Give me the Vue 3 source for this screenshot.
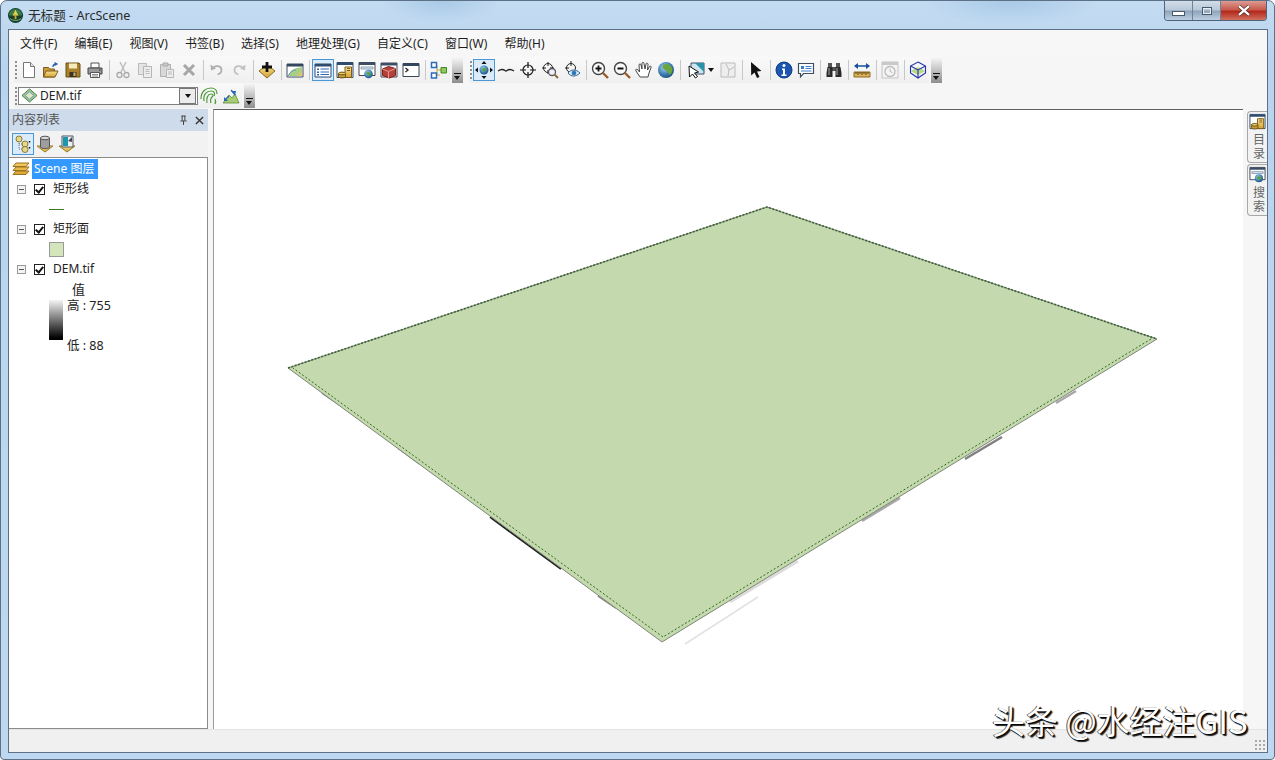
<script setup>
const menus = ['文件(F)', '编辑(E)', '视图(V)', '书签(B)', '选择(S)', '地理处理(G)', '自定义(C)', '窗口(W)', '帮助(H)']
const bar1a = ['new', 'open', 'save', 'print', '|', 'cut', 'copy', 'paste', 'del', '|', 'undo', 'redo', '|', 'add', '|', 'sceneimg', '|', '*toc', 'catalog', 'searchwin', 'toolbox', 'python', '|', 'model']
const bar1b = ['*nav', 'fly', 'target', 'targetzoom', 'targeteye', '|', 'zoomin', 'zoomout', 'hand', 'globe', '|', 'selmap', 'selgray', '|', 'arrow', '|', 'info', 'tip', '|', 'binoc', '|', 'measure', '|', 'clock', '|', 'cube']
const isActive = (n) => n[0] === '*'
const iconId = (n) => '#i-' + n.replace('*', '')
</script>

<template>
  <div class="window">
    <svg class="defs" aria-hidden="true">
      <defs>
        <linearGradient id="g-gold" x1="0" y1="0" x2="0" y2="1"><stop offset="0" stop-color="#f7e08c"/><stop offset="1" stop-color="#d3a237"/></linearGradient>
        <radialGradient id="g-globe" cx=".4" cy=".35" r=".7"><stop offset="0" stop-color="#a9d3ee"/><stop offset=".6" stop-color="#3d7fb4"/><stop offset="1" stop-color="#1d4d78"/></radialGradient>
      </defs>
      <symbol id="i-app" viewBox="0 0 18 18"><circle cx="9" cy="9" r="8" fill="#14402c"/><path d="M2 9a7 7 0 0 1 14 0z" fill="#3c7a4e"/><path d="M9 3l3 6H6z" fill="#e5d24a"/><path d="M8 8h2v5H8z" fill="#c5a52a"/><path d="M3 12c3 3 9 3 12 0" stroke="#7fb37f" fill="none"/></symbol>
      <symbol id="i-new" viewBox="0 0 18 18"><path d="M3.500 1.500h7l4 4v11h-11z" fill="#fff" stroke="#777"/><path d="M10.500 1.500v4h4" fill="#e6e6e6" stroke="#777"/></symbol>
      <symbol id="i-open" viewBox="0 0 18 18"><path d="M1.500 6.500h5l1 1.500h5v8h-11z" fill="#c99b3a" stroke="#7c5d1d"/><path d="M1.500 16l2.500-6h12l-3 6z" fill="url(#g-gold)" stroke="#7c5d1d"/><path d="M11 6c0-2 1.500-3 3-3M12.500 1.500l2.500 1.500-2.500 1.500" stroke="#2c64b0" stroke-width="1.300" fill="none"/></symbol>
      <symbol id="i-save" viewBox="0 0 18 18"><path d="M2 2h13l1 1v13H2z" fill="#a8802c" stroke="#6d5118"/><path d="M5 2.500h8v5H5z" fill="#f6e9bd"/><path d="M5.500 11h7v5h-7z" fill="#3d3320"/><path d="M9.500 11.500h2v3.500h-2z" fill="#cbb57c"/></symbol>
      <symbol id="i-print" viewBox="0 0 18 18"><path d="M5 2h8v5H5z" fill="#fff" stroke="#555"/><path d="M2 7h14v6H2z" fill="#9a9a9a" stroke="#444"/><path d="M4.500 11.500h9v5h-9z" fill="#fff" stroke="#555"/><path d="M6 13.500h6M6 15h6" stroke="#888"/><circle cx="13.800" cy="9" r=".8" fill="#333"/></symbol>
      <symbol id="i-cut" viewBox="0 0 18 18"><path d="M6 1l5 10M12 1L7 11" stroke="#bbb" stroke-width="1.400" fill="none"/><circle cx="5.500" cy="14" r="2.500" fill="none" stroke="#aaa" stroke-width="1.300"/><circle cx="12.500" cy="14" r="2.500" fill="none" stroke="#aaa" stroke-width="1.300"/></symbol>
      <symbol id="i-copy" viewBox="0 0 18 18"><path d="M2.500 2.500h8v11h-8z" fill="#e4e4e4" stroke="#bbb"/><path d="M7.500 5.500h8v11h-8z" fill="#eee" stroke="#b5b5b5"/><path d="M9.500 8.500h4M9.500 10.500h4M9.500 12.500h4" stroke="#bbb"/></symbol>
      <symbol id="i-paste" viewBox="0 0 18 18"><path d="M2.500 3.500h10v12h-10z" fill="#d8d8d8" stroke="#b0b0b0"/><path d="M5 2h5v3H5z" fill="#c8c8c8" stroke="#aaa"/><path d="M8.500 8.500h7v8h-7z" fill="#efefef" stroke="#b5b5b5"/><path d="M10 11h4M10 13h4" stroke="#bbb"/></symbol>
      <symbol id="i-del" viewBox="0 0 18 18"><path d="M4 4l10 10M14 4L4 14" stroke="#a6a6a6" stroke-width="3"/></symbol>
      <symbol id="i-undo" viewBox="0 0 18 18"><path d="M4.500 7c3-3 9-2.500 9 2 0 2.500-2 4-4 4.500" stroke="#b0b0b0" stroke-width="1.800" fill="none"/><path d="M2.500 3.500l.5 6 5-2z" fill="#b0b0b0"/></symbol>
      <symbol id="i-redo" viewBox="0 0 18 18"><path d="M13.500 7c-3-3-9-2.500-9 2 0 2.500 2 4 4 4.500" stroke="#c2c2c2" stroke-width="1.800" fill="none"/><path d="M15.500 3.500l-.5 6-5-2z" fill="#c2c2c2"/></symbol>
      <symbol id="i-add" viewBox="0 0 18 18"><path d="M1 10l8-6 8 6-8 7z" fill="url(#g-gold)" stroke="#8a6a22"/><path d="M7.600 1h2.800v3.600H14v2.800h-3.600V11H7.600V7.400H4V4.600h3.600z" fill="#111"/></symbol>
      <symbol id="i-sceneimg" viewBox="0 0 18 18"><path d="M1 3h16v13H1z" fill="#fff" stroke="#3a4d63"/><path d="M1 3h16v2.500H1z" fill="#32475f"/><path d="M2 15c3-7 7-8 14-9v9z" fill="#a9cf86"/><path d="M2 15c3-5 5-6 8-6" stroke="#5a99c9" fill="none"/><path d="M11 15l5-6v6z" fill="#dcc468"/></symbol>
      <symbol id="i-toc" viewBox="0 0 18 18"><path d="M1 3h16v13H1z" fill="#fff" stroke="#2f4b6d"/><path d="M1 3h16v2.500H1z" fill="#2f4b6d"/><path d="M3 7.500h2v1.500H3zM3 10.500h2V12H3zM3 13h2v1.500H3z" fill="#2c66c0"/><path d="M6.500 8h8.500M6.500 11h8.500M6.500 13.500h8.500" stroke="#2c66c0"/></symbol>
      <symbol id="i-catalog" viewBox="0 0 18 18"><path d="M1 1.500h16v15H1z" fill="#fff" stroke="#2f4b6d"/><path d="M1 1.500h16V4H1z" fill="#2f4b6d"/><path d="M9 6h6.500v10.500H9z" fill="url(#g-gold)" stroke="#7c5d1d"/><path d="M11 7.500h3M11 9.500h3" stroke="#7c5d1d"/><path d="M2.500 12.500v3c0 1.800 7 1.800 7 0v-3z" fill="#c69f35" stroke="#6d5118"/><ellipse cx="6" cy="12.500" rx="3.500" ry="1.400" fill="#e8cc60" stroke="#6d5118"/></symbol>
      <symbol id="i-searchwin" viewBox="0 0 18 18"><path d="M1 1.500h16v13H1z" fill="#fff" stroke="#445"/><path d="M1 1.500h16V4H1z" fill="#3d4f66"/><path d="M3 6h12v2H3z" fill="#dfe6ef" stroke="#8fa2b8"/><circle cx="10.500" cy="13" r="4.300" fill="url(#g-globe)"/><path d="M8 12c2-2 4-1 5 1-1 2-3 2-5-1z" fill="#5aa13a"/></symbol>
      <symbol id="i-toolbox" viewBox="0 0 18 18"><path d="M1 2h16v14H1z" fill="#fff" stroke="#445"/><path d="M1 2h16v2.500H1z" fill="#3d4f66"/><path d="M2.500 8l6-2.500 7 2v7l-6 2.500-7-2.500z" fill="#b8403a" stroke="#7a1f1c"/><path d="M8.500 10.500l7-3M8.500 10.500v6.500M8.500 10.500l-6-2.500" stroke="#e59b8f" fill="none"/></symbol>
      <symbol id="i-python" viewBox="0 0 18 18"><path d="M1 2.500h16v13H1z" fill="#fff" stroke="#3a4657"/><path d="M1 2.500h16V5H1z" fill="#33465e"/><path d="M3.500 7l2.500 2-2.500 2" stroke="#222" stroke-width="1.300" fill="none"/></symbol>
      <symbol id="i-model" viewBox="0 0 18 18"><path d="M4 4h3v10h3M7 9h4" stroke="#c9a23a" fill="none"/><path d="M1.500 1.500h5v5h-5zM1.500 12h5v5h-5z" fill="#fff" stroke="#2a6bc0" stroke-width="1.500"/><path d="M11 6.500h5.500V12H11z" fill="#8ecb5a" stroke="#3e8a22"/></symbol>
      <symbol id="i-nav" viewBox="0 0 18 18"><circle cx="9" cy="9" r="4.500" fill="url(#g-globe)"/><path d="M6.500 8c2-2 4-1 5 1-1 2-3 2-5-1z" fill="#5aa13a"/><path d="M9 0l2.500 3h-5zM9 18l2.500-3h-5zM0 9l3-2.500v5zM18 9l-3-2.500v5z" fill="#111"/></symbol>
      <symbol id="i-fly" viewBox="0 0 18 18"><path d="M1 10c3-2 5-2 7-.5 1 1 1 1 2 0 2-1.500 4-1.500 7 .5" stroke="#222" stroke-width="1.300" fill="none"/></symbol>
      <symbol id="i-target" viewBox="0 0 18 18"><circle cx="9" cy="9" r="5" fill="none" stroke="#222" stroke-width="1.200"/><path d="M9 1v6M9 11v6M1 9h6M11 9h6" stroke="#111" stroke-width="1.200"/></symbol>
      <symbol id="i-targetzoom" viewBox="0 0 18 18"><circle cx="7" cy="7" r="4.500" fill="none" stroke="#222"/><path d="M7 1v4M7 9v4M1 7h4M9 7h4" stroke="#222"/><circle cx="11" cy="11" r="3.500" fill="#eef" stroke="#555" stroke-width="1.300"/><path d="M13.500 13.500l3.500 3.500" stroke="#8a6a3a" stroke-width="2"/></symbol>
      <symbol id="i-targeteye" viewBox="0 0 18 18"><circle cx="8" cy="7" r="4.500" fill="none" stroke="#222"/><path d="M8 0v5M2 7h4" stroke="#222"/><path d="M5 12c3-4 8-4 12 0-4 4-9 4-12 0z" fill="#dceaf6" stroke="#35648f"/><circle cx="11" cy="12" r="2.300" fill="#2d77b8"/></symbol>
      <symbol id="i-zoomin" viewBox="0 0 18 18"><circle cx="7.500" cy="7.500" r="6" fill="#fafafa" stroke="#444" stroke-width="1.400"/><path d="M4.500 7.500h6M7.500 4.500v6" stroke="#111" stroke-width="1.800"/><path d="M12 12l5 5" stroke="#9a5a2a" stroke-width="2.400"/></symbol>
      <symbol id="i-zoomout" viewBox="0 0 18 18"><circle cx="7.500" cy="7.500" r="6" fill="#fafafa" stroke="#444" stroke-width="1.400"/><path d="M4.500 7.500h6" stroke="#111" stroke-width="1.800"/><path d="M12 12l5 5" stroke="#9a5a2a" stroke-width="2.400"/></symbol>
      <symbol id="i-hand" viewBox="0 0 18 18"><path d="M5 16L1 10c-1-2 1-2.500 2-1l1.500 2L4 4c0-1.500 2-1.500 2 0l1 4V2.500c0-1.500 2-1.500 2 0L10 8l1-5c.3-1.500 2-1 2 .5L12.500 9l2-3.500c1-1 2 0 1.500 1L14 12l-1 4z" fill="#fff" stroke="#333" stroke-width=".9"/></symbol>
      <symbol id="i-globe" viewBox="0 0 18 18"><circle cx="9" cy="9" r="8" fill="url(#g-globe)"/><path d="M6 4c3-2 7-1 9 3 1 4-1 6-3 7 0-3-2-3-3-5-2 0-4-2-3-5z" fill="#6aa63d"/></symbol>
      <symbol id="i-selmap" viewBox="0 0 18 18"><path d="M4 2h13v11H4z" fill="#cfe5ee" stroke="#3d4f66"/><path d="M8 2l9 9V2z" fill="#2a93aa"/><path d="M2 5l.5 11 3-3 3 4 2-1.500-3-3.500 4-1z" fill="#fff" stroke="#111"/></symbol>
      <symbol id="i-selgray" viewBox="0 0 18 18"><path d="M2 2h14v14H2z" fill="#eee" stroke="#bbb"/><path d="M7 3l3 6-1 6M10 9l5-3" stroke="#bbb" fill="none"/></symbol>
      <symbol id="i-arrow" viewBox="0 0 18 18"><path d="M4 1l.2 13.500 3.300-3 2.500 5.500 2.500-1-2.500-5.500 4.500-.5z" fill="#111"/></symbol>
      <symbol id="i-info" viewBox="0 0 18 18"><circle cx="9" cy="9" r="8" fill="#1d56b0" stroke="#0e3a80"/><circle cx="9" cy="4.500" r="1.500" fill="#fff"/><path d="M7 7.500h3v6h1.500V15h-5v-1.500H8V9H7z" fill="#fff"/></symbol>
      <symbol id="i-tip" viewBox="0 0 18 18"><path d="M1.500 2.500h15v10h-10l-3 3.500v-3.500h-2z" fill="#fff" stroke="#3e4e5e" stroke-width="1.200"/><path d="M4 5h3v3H4z" fill="#3f7fcf"/><path d="M8.500 5.500h6M8.500 7.500h6M4 10h10.500" stroke="#3f7fcf"/></symbol>
      <symbol id="i-binoc" viewBox="0 0 18 18"><path d="M3 2h4v4H3zM11 2h4v4h-4zM7 6h4v4H7z" fill="#555"/><path d="M2.500 6h5v10h-6v-4zM10.500 6h5l1 6v4h-6z" fill="#2a2a2a"/><path d="M4 7v7M12 7v7" stroke="#aaa"/></symbol>
      <symbol id="i-measure" viewBox="0 0 18 18"><path d="M1 11h16v5H1z" fill="#dcb25c" stroke="#8a6a22"/><path d="M3 11v2M5 11v3M7 11v2M9 11v3M11 11v2M13 11v3M15 11v2" stroke="#5a4410"/><path d="M2 5h14" stroke="#14509c" stroke-width="1.300"/><path d="M1 5l4-3v6zM17 5l-4-3v6z" fill="#14509c"/></symbol>
      <symbol id="i-clock" viewBox="0 0 18 18"><path d="M1 1h16v16H1z" fill="#f3f3f3" stroke="#c4c4c4"/><path d="M1 1h16v3H1z" fill="#c9c9c9"/><circle cx="9" cy="10.500" r="5" fill="#f5f5f5" stroke="#bbb" stroke-width="1.300"/><path d="M9 7.500v3l2.500 1" stroke="#bbb" fill="none"/></symbol>
      <symbol id="i-cube" viewBox="0 0 18 18"><path d="M1.500 10L9 14l7.500-4L9 6z" fill="#b9d98a"/><path d="M9 1l7.500 4v7L9 17l-7.500-5V5zM1.500 5L9 9l7.500-4M9 9v8" fill="none" stroke="#2233aa" stroke-width="1.100"/></symbol>
      <symbol id="i-dem" viewBox="0 0 18 18"><path d="M9 2l8 7-8 7-8-7z" fill="#9bc48a" stroke="#4f7a55"/><path d="M9 5l4.500 4L9 13 4.500 9z" fill="#dfe8c2" stroke="#6f9fbc"/></symbol>
      <symbol id="i-contour" viewBox="0 0 18 18"><g fill="none" stroke="#4d9a3a" stroke-width="1.200"><path d="M1 12C1 4 6 1 11 1s6 3 6 6"/><path d="M4 14C3 7 7 4 11 4s4 3 3 5"/><path d="M7 16c-1-5 1-9 4-9s2 2 1 3-2 3-1 6"/><path d="M15 12c1 2 1 3 0 5"/></g></symbol>
      <symbol id="i-terrain" viewBox="0 0 18 18"><path d="M1 16l6-8 3 3 3-4 4 9z" fill="#a7cf72" stroke="#5a8a3a" stroke-width=".8"/><path d="M3 13l4-4" stroke="#2a67b8" stroke-width="1.300"/><path d="M2 10v4h4zM9 4l5 0-1 5z" fill="#2a67b8"/><path d="M9 3l3 3" stroke="#2a67b8" stroke-width="1.300"/></symbol>
      <symbol id="i-byorder" viewBox="0 0 18 18"><path d="M5 4v10h5M5 9h5" stroke="#777" stroke-dasharray="1 1" fill="none"/><circle cx="5" cy="4" r="3" fill="#e6d88a" stroke="#8a7a3a"/><circle cx="11" cy="9" r="3" fill="#e6d88a" stroke="#8a7a3a"/><circle cx="11" cy="14.500" r="3" fill="#e6d88a" stroke="#8a7a3a"/><path d="M15.500 6v1.500M15.500 12v1.500" stroke="#111" stroke-width="1.500"/></symbol>
      <symbol id="i-bysource" viewBox="0 0 18 18"><path d="M1 11h16l-8 6z" fill="url(#g-gold)" stroke="#9a7a2a"/><path d="M4.500 3v9c0 2 9 2 9 0V3z" fill="#9e9e9e" stroke="#555"/><ellipse cx="9" cy="3" rx="4.500" ry="1.800" fill="#d8d8d8" stroke="#555"/></symbol>
      <symbol id="i-byvis" viewBox="0 0 18 18"><path d="M1 11h16l-8 6z" fill="url(#g-gold)" stroke="#9a7a2a"/><path d="M4 1h11v11H4z" fill="#f0f0f0" stroke="#4a5666"/><path d="M5 2h5v9H5z" fill="#1c97ae"/><path d="M10 6l4-4v5z" fill="#445"/></symbol>
      <symbol id="i-layers" viewBox="0 0 18 18"><path d="M4 3h13l-3 3.500H1z" fill="#f0c65a" stroke="#9a7420"/><path d="M4 7h13l-3 3.500H1z" fill="#e9b849" stroke="#9a7420"/><path d="M4 11h13l-3 3.500H1z" fill="#dfa838" stroke="#9a7420"/></symbol>
    </svg>

    <header class="titlebar">
      <svg class="app-icon"><use href="#i-app" /></svg>
      <span class="title">无标题 - ArcScene</span>
      <div class="controls">
        <div class="ctl"><span class="min-mark"></span></div>
        <div class="ctl"><span class="max-mark"></span></div>
        <div class="ctl close">
          <svg class="close-mark" viewBox="0 0 12 10"><path d="M1.500 1l9 8M10.500 1l-9 8" stroke="#4a2a28" stroke-width="3.200"/><path d="M1.500 1l9 8M10.500 1l-9 8" stroke="#fff" stroke-width="2"/></svg>
        </div>
      </div>
    </header>

    <div class="client">
      <nav class="menubar">
        <span v-for="m in menus" :key="m" class="menu">{{ m }}</span>
      </nav>

      <div class="toolrow first">
        <div class="strip s1a">
          <i class="handle"></i>
          <template v-for="(b, i) in bar1a" :key="i">
            <i v-if="b === '|'" class="sep"></i>
            <span v-else class="btn" :class="{ active: isActive(b) }"><svg class="ico"><use :href="iconId(b)" /></svg></span>
          </template>
        </div>
        <span class="chev"><i></i></span>
        <div class="strip s1b">
          <i class="handle"></i>
          <template v-for="(b, i) in bar1b" :key="i">
            <i v-if="b === '|'" class="sep"></i>
            <span v-else class="btn" :class="{ active: isActive(b), wide: b === 'selmap' }">
              <svg class="ico"><use :href="iconId(b)" /></svg>
              <i v-if="b === 'selmap'" class="caret"></i>
            </span>
          </template>
        </div>
        <span class="chev"><i></i></span>
      </div>

      <div class="toolrow second">
        <div class="strip s2">
          <i class="handle"></i>
          <div class="combo">
            <svg class="ico combo-ico"><use href="#i-dem" /></svg>
            <span class="combo-text">DEM.tif</span>
            <span class="combo-btn"><i class="caret"></i></span>
          </div>
          <span class="btn"><svg class="ico"><use href="#i-contour" /></svg></span>
          <span class="btn"><svg class="ico"><use href="#i-terrain" /></svg></span>
        </div>
        <span class="chev"><i></i></span>
      </div>

      <div class="body">
        <aside class="panel">
          <div class="panel-head">
            <span>内容列表</span>
            <span class="panel-actions">
              <svg class="pin" viewBox="0 0 10 12"><path d="M2.500 1h5M3.500 1v5M6.500 1v5M1.500 6.500h7M5 6.500V11" stroke="#333" fill="none"/></svg>
              <svg class="x" viewBox="0 0 10 10"><path d="M1 1l8 8M9 1l-8 8" stroke="#333" stroke-width="1.500"/></svg>
            </span>
          </div>
          <div class="panel-tools">
            <span class="btn active"><svg class="ico"><use href="#i-byorder" /></svg></span>
            <span class="btn"><svg class="ico"><use href="#i-bysource" /></svg></span>
            <span class="btn"><svg class="ico"><use href="#i-byvis" /></svg></span>
          </div>
          <div class="tree">
            <div class="row scene">
              <svg class="ico"><use href="#i-layers" /></svg>
              <span class="scene-label">Scene 图层</span>
            </div>
            <div class="row layer"><i class="minus"></i><i class="check"></i><span>矩形线</span></div>
            <div class="row legend"><i class="line-sym"></i></div>
            <div class="row layer"><i class="minus"></i><i class="check"></i><span>矩形面</span></div>
            <div class="row legend"><i class="fill-sym"></i></div>
            <div class="row layer"><i class="minus"></i><i class="check"></i><span>DEM.tif</span></div>
            <div class="row value">值</div>
            <div class="ramp-block">
              <i class="ramp"></i>
              <div class="ramp-labels"><span>高 : 755</span><span>低 : 88</span></div>
            </div>
          </div>
        </aside>

        <main class="canvas">
          <svg class="scene-svg" viewBox="214 110 1029 619">
            <g fill="none">
              <path d="M685 644L758 597" stroke="#e2e2e2" stroke-width="1.500"/>
              <path d="M490 517L561 569" stroke="#222" stroke-width="2"/>
              <path d="M322 393L340 405M398 448L420 464M598 596L616 608" stroke="#8a8a8a" stroke-width="2"/>
              <path d="M730 602L798 561" stroke="#dcdcdc" stroke-width="3"/>
              <path d="M862 521L900 498M1056 403L1076 391" stroke="#a8a8a8" stroke-width="2.500"/>
              <path d="M965 459L1002 437" stroke="#808080" stroke-width="2.500"/>
            </g>
            <polygon points="767,207 1157,339 662,642 288,368" fill="#c5d9ae" stroke="#7d8776" stroke-width="1"/>
            <polyline points="288,368 767,207 1157,339" fill="none" stroke="#3d6238" stroke-width="1.600" stroke-dasharray="2 1.500"/>
            <polyline points="1151,339 663,637 293,368" fill="none" stroke="#2f6a1c" stroke-width="1" stroke-dasharray="2 2"/>
          </svg>
        </main>

        <aside class="rail">
          <div class="tab"><svg class="ico"><use href="#i-catalog" /></svg><span>目录</span></div>
          <div class="tab"><svg class="ico"><use href="#i-searchwin" /></svg><span>搜索</span></div>
        </aside>
      </div>

      <footer class="status"><span class="grip"></span></footer>
    </div>

    <div class="watermark">头条 @水经注GIS</div>
  </div>
</template>

<style>
html, body { margin: 0; background: #fff; }
</style>

<style scoped>
.window {
  position: relative;
  box-sizing: border-box;
  width: 1275px;
  height: 760px;
  display: flex;
  flex-direction: column;
  overflow: hidden;
  border-radius: 7px 7px 4px 4px;
  border: 1px solid #5c7186;
  background: linear-gradient(#c4dcf2, #b9d4ee 8%, #bdd8f0);
  font: 12px/16px "Noto Sans", "Noto Sans CJK SC", sans-serif;
  color: #222;
}
.defs { position: absolute; width: 0; height: 0; }
.ico { width: 18px; height: 18px; display: block; flex: none; }

.titlebar {
  height: 28px;
  flex: none;
  display: flex;
  align-items: flex-start;
  padding-left: 6px;
  background:
    radial-gradient(ellipse 60px 22px at 440px 0, #a9c9e6, transparent),
    radial-gradient(ellipse 90px 24px at 1010px 0, #a9c9e6, transparent);
}
.app-icon { width: 17px; height: 17px; margin-top: 6px; }
.title { margin: 6px 0 0 4px; color: #2a2a2a; line-height: 17px; font-size: 12.600px; }
.controls {
  margin-left: auto;
  margin-right: 7px;
  display: flex;
  height: 19px;
  border: 1px solid #4f6479;
  border-top: 0;
  border-radius: 0 0 4px 4px;
  overflow: hidden;
}
.ctl {
  width: 27px;
  display: flex;
  align-items: center;
  justify-content: center;
  border-right: 1px solid #6f8296;
  background: linear-gradient(#d2dde8, #b8c8d8 48%, #8ea3b8 52%, #bcd0e2);
}
.close { width: 45px; border-right: 0; background: linear-gradient(#dd9c94, #c85b4d 45%, #b3291c 55%, #d06f5f); }
.min-mark { width: 11px; height: 3px; background: #fff; border: 1px solid #46586b; margin-top: 6px; }
.max-mark { width: 8px; height: 6px; border: 1px solid #46586b; outline: 1px solid #e8eef4; outline-offset: -2px; }
.close-mark { width: 14px; height: 11px; }

.client {
  flex: 1;
  min-height: 0;
  margin: 0 6px 6px 7px;
  border: 1px solid #5c7186;
  background: #f6f6f6;
  display: flex;
  flex-direction: column;
}
.menubar { height: 27px; flex: none; display: flex; align-items: center; padding-left: 3px; background: #f7f7f7; }
.menu { padding: 0 8.550px; color: #1e1e1e; }
.menu:first-child { padding-left: 8px; }

.toolrow { display: flex; flex: none; align-items: stretch; }
.first { height: 26px; }
.second { height: 26px; }
.strip { display: flex; align-items: center; background: linear-gradient(#f9f9f9, #efefef); }
.s1a { margin-left: 5px; }
.s1b { margin-left: 6px; }
.s2 { margin-left: 5px; height: 25px; }
.handle {
  width: 2px;
  height: 18px;
  margin: 0 1px;
  background: repeating-linear-gradient(#8f8f8f 0 2px, transparent 2px 4px);
}
.sep { width: 1px; height: 20px; margin: 0 2px 0 3px; background: #c8c8c8; }
.btn {
  width: 22px;
  height: 22px;
  box-sizing: border-box;
  flex: none;
  display: flex;
  align-items: center;
  justify-content: center;
}
.btn.wide { width: 34px; gap: 3px; }
.btn.active { background: #dcebfa; border: 1px solid #4a97d8; }
.caret { width: 0; height: 0; border: 3px solid transparent; border-top: 4px solid #111; border-bottom: 0; flex: none; }
.chev {
  width: 11px;
  margin: 1px 0 0 2px;
  position: relative;
  background: linear-gradient(#f4f4f4, #8e8e8e);
  display: flex;
  justify-content: center;
  align-items: flex-end;
  padding-bottom: 3px;
}
.second .chev { margin-bottom: 1px; }
.chev i { width: 7px; height: 7px; background: linear-gradient(#111 0 1px, transparent 1px 3px, transparent 3px); position: relative; }
.chev i::after { content: ""; position: absolute; left: 0; top: 3px; border: 3.500px solid transparent; border-top: 4px solid #111; border-bottom: 0; }

.combo {
  width: 180px;
  height: 18px;
  box-sizing: border-box;
  display: flex;
  align-items: center;
  gap: 2px;
  padding-left: 2px;
  background: #fff;
  border: 1px solid #7f7f7f;
}
.combo-ico { width: 17px; height: 17px; }
.combo-text { flex: 1; }
.combo-btn {
  width: 15px;
  height: 14px;
  margin-right: 1px;
  display: flex;
  align-items: center;
  justify-content: center;
  background: #ececec;
  border: 1px solid #777;
}

.body { flex: 1; min-height: 0; display: flex; }
.panel { width: 199px; flex: none; display: flex; flex-direction: column; }
.panel-head {
  height: 22px;
  display: flex;
  align-items: center;
  justify-content: space-between;
  padding: 0 4px 0 3px;
  background: #cddbea;
  color: #555;
}
.panel-actions { display: flex; align-items: center; gap: 7px; }
.pin { width: 9px; height: 11px; }
.x { width: 9px; height: 9px; }
.panel-tools { height: 26px; display: flex; align-items: center; padding-left: 3px; background: #f2f2f2; }
.tree {
  flex: 1;
  min-height: 0;
  box-sizing: border-box;
  background: #fff;
  border: 1px solid #8c8c8c;
  border-left: 0;
  padding-top: 1px;
}
.row { height: 20px; display: flex; align-items: center; }
.scene { padding-left: 3px; gap: 2px; }
.scene-label { background: #3399ff; color: #fff; padding: 0 2px; line-height: 20px; height: 20px; width: 62px; white-space: nowrap; }
.layer { padding-left: 8px; }
.minus {
  width: 9px;
  height: 9px;
  box-sizing: border-box;
  border: 1px solid #999;
  background: linear-gradient(#555, #555) center / 5px 1px no-repeat, #f4f4f4;
}
.check {
  width: 11px;
  height: 11px;
  box-sizing: border-box;
  margin: 0 8px;
  border: 1px solid #222;
  background: #fff;
  position: relative;
}
.check::after {
  content: "";
  position: absolute;
  left: 2px;
  top: 0;
  width: 3px;
  height: 6px;
  border: solid #111;
  border-width: 0 2px 2px 0;
  transform: rotate(40deg);
}
.legend { padding-left: 40px; }
.line-sym { width: 15px; height: 1px; background: #3c7a1a; }
.fill-sym { width: 15px; height: 15px; box-sizing: border-box; background: #d5e5bb; border: 1px solid #999; }
.value { padding-left: 63px; font-size: 13px; }
.ramp-block { display: flex; height: 54px; padding-left: 40px; }
.ramp { width: 14px; height: 40px; margin-top: 1px; background: linear-gradient(#f4f4f4, #000 95%); flex: none; }
.ramp-labels { display: flex; flex-direction: column; justify-content: space-between; margin-left: 4px; line-height: 14px; font-size: 12.500px; }

.canvas {
  flex: 1;
  min-width: 0;
  margin-left: 5px;
  background: #fff;
  border-top: 1px solid #5e5e5e;
  border-left: 1px solid #9a9a9a;
}
.scene-svg { width: 100%; height: 100%; display: block; }

.rail { width: 24px; flex: none; padding: 2px 0 0 4px; box-sizing: border-box; display: flex; flex-direction: column; gap: 1px; background: #f6f6f6; }
.tab {
  height: 52px;
  box-sizing: border-box;
  border: 1px solid #a8a8a8;
  border-right: 0;
  border-radius: 4px 0 0 4px;
  background: #f2f2f2;
  display: flex;
  flex-direction: column;
  align-items: center;
  padding-top: 1px;
  color: #666;
}
.tab span { writing-mode: vertical-rl; letter-spacing: 2px; line-height: 14px; margin-top: 3px; }
.tab .ico { width: 17px; height: 17px; }

.status { height: 23px; flex: none; position: relative; background: #f0f0f0; border-top: 1px solid #e4e4e4; box-sizing: border-box; }
.grip {
  position: absolute;
  right: 2px;
  bottom: 2px;
  width: 11px;
  height: 11px;
  background: radial-gradient(circle, #aaa 0 1px, transparent 1px) 0 0 / 4px 4px;
}
.watermark {
  position: absolute;
  left: 991px;
  top: 701px;
  font: 33px/36px "Noto Sans CJK SC", "Noto Sans", sans-serif;
  color: #fff;
  text-shadow: 1px 1px 1px #000, 2px 2px 1px #222, -1px 0 0 #555;
  white-space: nowrap;
}
</style>
